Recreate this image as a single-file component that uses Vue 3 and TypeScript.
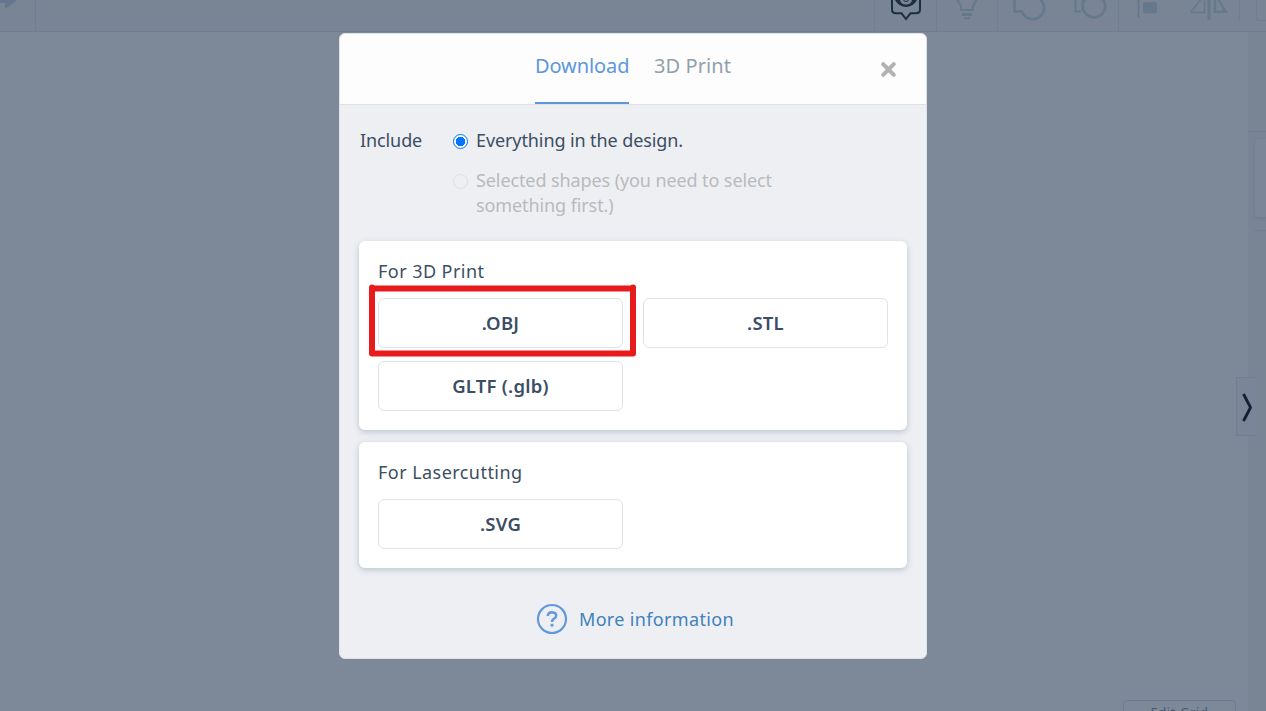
<script setup lang="ts">
interface Format { label: string; highlighted?: boolean }
interface Section { title: string; formats: Format[] }

const sections: Section[] = [
  { title: 'For 3D Print', formats: [{ label: '.OBJ', highlighted: true }, { label: '.STL' }, { label: 'GLTF (.glb)' }] },
  { title: 'For Lasercutting', formats: [{ label: '.SVG' }] },
]
</script>

<template>
  <div class="screen">
    <header class="toolbar">
      <div class="cell undo">
        <svg width="35" height="31" viewBox="0 0 35 31"><path d="M0 0H17L5 9V3H0Z" fill="#64778e" /></svg>
      </div>
      <div class="spacer"></div>
      <div class="cell note">
        <svg width="61" height="31" viewBox="875 0 61 31" fill="none" stroke="#1c2f40">
          <path d="M892 -6V9.500Q892 13.300 896 13.300H901.500L906 19L910.500 13.300H916Q920 13.300 920 9.500V-6" stroke-width="2" />
          <path d="M895 0Q899 7 906 7T917 0H912Q911 4.500 906 4.500T900 0Z" fill="#1c2f40" stroke="none" />
          <path d="M903.500 0Q904 1.500 906 1.500T908.500 0" stroke-width="1" />
        </svg>
      </div>
      <div class="cell bulb">
        <svg width="60" height="31" viewBox="937 0 60 31" fill="none" stroke="#66788c" stroke-width="2">
          <path d="M957 -1L961 6V10H973V6L977 -1" />
          <path d="M962 14.500H972" stroke-width="2.800" />
          <path d="M964 18.200H970" />
        </svg>
      </div>
      <div class="cell combine">
        <svg width="120" height="31" viewBox="998 0 120 31" fill="none" stroke="#66788c" stroke-width="2.500">
          <path d="M1014.500 -2V11.500H1022A11.300 11.300 0 1 0 1036 -3" />
          <path d="M1081 11.500H1075.500V-2M1084 -1H1082.500V11" stroke-width="2" />
          <circle cx="1094" cy="6.300" r="11.200" />
        </svg>
      </div>
      <div class="cell align">
        <svg width="120" height="31" viewBox="1119 0 120 31" fill="none" stroke="#66788c">
          <path d="M1138.500 -1V17.500" stroke-width="2" />
          <rect x="1143" y="2.300" width="14" height="11" rx="1.500" fill="#66788c" stroke="none" />
          <path d="M1203 -3L1191 11.500Q1191 12.500 1192 12.500H1204.500V-3" stroke-width="1.300" />
          <path d="M1209 -2V20" stroke-width="3" />
          <path d="M1215 -3V11.700H1225.500L1217 -3" stroke-width="2.500" />
        </svg>
      </div>
      <div class="search"></div>
    </header>

    <div class="workspace">
      <main class="canvas">
        <button class="edit-grid">Edit Grid</button>
      </main>
      <aside class="sidebar">
        <div class="side-head"></div>
        <div class="side-card"></div>
        <div class="side-rest"></div>
      </aside>
      <div class="handle">
        <svg width="19" height="57" viewBox="0 0 19 57"><path d="M6.500 16L13.500 29.500L6.500 43" fill="none" stroke="#142032" stroke-width="2.800" stroke-linejoin="round" /></svg>
      </div>
    </div>

    <div class="overlay">
      <section class="modal">
        <nav class="tabs">
          <a class="tab active">Download</a>
          <a class="tab">3D Print</a>
          <button class="close" aria-label="Close">
            <svg width="17" height="17" viewBox="0 0 17 17"><path d="M3.200 3.200L13.800 13.800M13.800 3.200L3.200 13.800" stroke="#b2b2b2" stroke-width="4" stroke-linecap="round" /></svg>
          </button>
        </nav>
        <div class="body">
          <div class="include">
            <span class="include-label">Include</span>
            <div class="options">
              <label class="option">
                <span class="radio checked"></span>
                <span>Everything in the design.</span>
              </label>
              <label class="option disabled">
                <span class="radio"></span>
                <span>Selected shapes (you need to select<br />something first.)</span>
              </label>
            </div>
          </div>
          <section v-for="section in sections" :key="section.title" class="card">
            <h2>{{ section.title }}</h2>
            <div class="formats">
              <button v-for="format in section.formats" :key="format.label" class="format">
                {{ format.label }}
                <svg v-if="format.highlighted" class="marker" width="268" height="74" viewBox="0 0 268 74" fill="none" stroke="#e71b1b" stroke-width="6" stroke-linecap="round">
                  <path d="M4 4.500H265M4 69.500H265M4 3.500V69.500M265 3.500V69.500" />
                </svg>
              </button>
            </div>
          </section>
          <a class="more">
            <svg width="32" height="32" viewBox="0 0 32 32" fill="none" stroke="#6399dc">
              <circle cx="16" cy="16" r="14" stroke-width="2.200" />
              <path d="M11.800 13Q12 9.300 16 9.300Q20.200 9.500 20.200 12.800Q20.200 14.500 17.800 15.900Q16 17 16 19" stroke-width="2.500" />
              <path d="M16 20.800V23.500" stroke-width="2.900" />
            </svg>
            <span>More information</span>
          </a>
        </div>
      </section>
    </div>
  </div>
</template>

<style scoped>
* { box-sizing: border-box; }
.screen {
  position: relative;
  display: flex;
  flex-direction: column;
  width: 1266px;
  height: 711px;
  overflow: hidden;
  background: #7d8899;
  color: #3b4e64;
  font-family: "Noto Sans", sans-serif;
  font-size: 18px;
}
button { margin: 0; padding: 0; font: inherit; color: inherit; background: none; }
svg { display: block; }
.toolbar { display: flex; height: 32px; background: #798495; border-bottom: 1px solid #6f7e91; }
.cell { border-right: 1px solid #6f7e91; }
.undo { width: 36px; }
.spacer { flex: 1; border-right: 1px solid #6f7e91; }
.align { height: 21px; }
.align svg { overflow: visible; }
.search { width: 10px; height: 21px; margin-left: 16px; border: solid #6f7e91; border-width: 0 0 1px 1px; border-radius: 0 0 0 3px; }
.workspace { position: relative; display: flex; flex: 1; }
.canvas { display: flex; flex: 1; align-items: flex-end; justify-content: flex-end; overflow: hidden; }
.edit-grid {
  width: 113px;
  height: 28px;
  margin: 0 12px -17px 0;
  border: 1px solid #6f7c90;
  border-radius: 4px;
  color: #48586f;
  font-size: 13px;
  line-height: 22px;
  letter-spacing: 0.6px;
  padding-bottom: 4px;
}
.sidebar { display: flex; flex-direction: column; width: 18px; background: #798495; }
.side-head { height: 100px; border-bottom: 1px solid #6f7e91; }
.side-card { height: 78px; margin: 7px 0 0 7px; border-radius: 4px 0 0 4px; background: #7b8798; box-shadow: 0 1px 3px #6c7b8e; }
.side-rest { margin: 13px 0 0 6px; border-top: 1px solid #6f7e91; }
.handle { position: absolute; top: 345px; right: 10px; width: 20px; height: 59px; border: 1px solid #6d8194; border-right: 0; background: #7a8697; }
.overlay { position: absolute; inset: 0; display: flex; justify-content: center; padding-top: 33px; }
.modal { width: 588px; height: 626px; overflow: hidden; border: 1px solid #dfe3e8; border-radius: 6px; background: #eeeff3; }
.tabs { display: flex; height: 71px; padding: 0 25px 0 195px; border-bottom: 1px solid #dee0e4; background: #fdfdfd; }
.tab { height: 70px; line-height: 64px; font-size: 20px; white-space: nowrap; color: #92a0ac; letter-spacing: 0.1px; }
.tab.active { width: 94px; margin-right: 25px; border-bottom: 2px solid #5c97dc; color: #5c97dc; letter-spacing: -0.1px; }
.close { display: grid; place-items: center; width: 25px; height: 25px; margin: 23px 0 0 auto; border: 0; }
.body { padding: 23px 19px 0; }
.include { display: flex; height: 113px; line-height: 25px; letter-spacing: -0.1px; }
.include-label { width: 94px; padding-left: 1px; }
.options { display: flex; flex-direction: column; gap: 15px; }
.option { display: flex; gap: 8px; white-space: nowrap; }
.radio { flex: none; width: 15px; height: 15px; margin-top: 6px; border: 1px solid #dcdddf; border-radius: 50%; }
.radio.checked { border: 1.500px solid #0075ff; background: radial-gradient(circle, #0075ff 0 4.500px, #fff 5px); }
.disabled { color: #b8babd; }
.card { height: 189px; padding: 18px 19px; border-radius: 6px; background: #fff; box-shadow: 0 2px 6px #b9c5d2; }
.card + .card { height: 126px; margin-top: 12px; }
h2 { height: 25px; margin: 0 0 14px; font-size: 18px; font-weight: 400; line-height: 25px; letter-spacing: 0.45px; }
.formats { display: grid; grid-template-columns: 245px 245px; gap: 13px 20px; }
.format { position: relative; height: 50px; padding-bottom: 2px; border: 1px solid #dfe2e8; border-radius: 6px; font-size: 18.500px; font-weight: 600; letter-spacing: 0.25px; }
.marker { position: absolute; top: -15px; left: -11px; }
.more { display: flex; align-items: center; justify-content: center; gap: 11px; margin-top: 35px; margin-left: 4px; color: #3f82bd; letter-spacing: 0.35px; }
</style>
